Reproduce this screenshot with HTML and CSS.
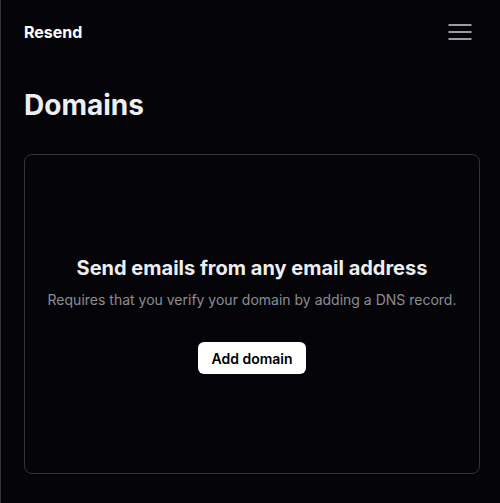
FILE: index.html
```html
<!DOCTYPE html>
<html lang="en">
<head>
<meta charset="utf-8">
<meta name="viewport" content="width=device-width, initial-scale=1">
<title>Domains</title>
<link rel="stylesheet" href="styles.css">
</head>
<body>
<header class="topbar">
<a class="brand" href="#">Resend</a>
<button class="menu" type="button" aria-label="Menu">
<svg width="24" height="18" viewBox="0 0 24 18" aria-hidden="true"><path d="M.5 2H23.5M.5 9H23.5M.5 16H23.5" fill="none" stroke="currentColor" stroke-width="2"/></svg>
</button>
</header>
<main class="content">
<h1 class="title">Domains</h1>
<section class="empty">
<h2 class="empty-title">Send emails from any email address</h2>
<p class="empty-text">Requires that you verify your domain by adding a DNS record.</p>
<button class="add" type="button">Add domain</button>
</section>
</main>
</body>
</html>
```

FILE: styles.css
```css
* { box-sizing: border-box; }
body {
  margin: 0;
  min-height: 100vh;
  padding: 0 20px 0 23px;
  border-left: 1px solid #333438;
  background: #050509;
  color: #edeef0;
  font-family: Inter, "Liberation Sans", sans-serif;
}
.topbar {
  display: flex;
  align-items: center;
  justify-content: space-between;
  height: 64px;
}
.brand {
  color: #fff;
  font-size: 16px;
  font-weight: 700;
  line-height: 24px;
  text-decoration: none;
}
.menu {
  display: flex;
  padding: 8px;
  border: 0;
  background: none;
  color: #9b9ca3;
}
.content { padding: 24px 0 28px; }
.title {
  margin: 0;
  font-size: 28px;
  font-weight: 700;
  line-height: 34px;
}
.empty {
  display: flex;
  flex-direction: column;
  align-items: center;
  justify-content: center;
  min-height: 320px;
  margin-top: 32px;
  padding: 16px;
  border: 1px solid #333438;
  border-radius: 8px;
  text-align: center;
}
.empty-title {
  margin: 0 0 8px;
  font-size: 20px;
  font-weight: 700;
  line-height: 28px;
}
.empty-text {
  margin: 0 0 32px;
  color: #8b8d94;
  font-size: 14px;
  line-height: 20px;
}
.add {
  height: 32px;
  padding: 0 13px;
  border: 0;
  border-radius: 6px;
  background: #fff;
  color: #000;
  font-family: inherit;
  font-size: 14px;
  font-weight: 600;
}
```
